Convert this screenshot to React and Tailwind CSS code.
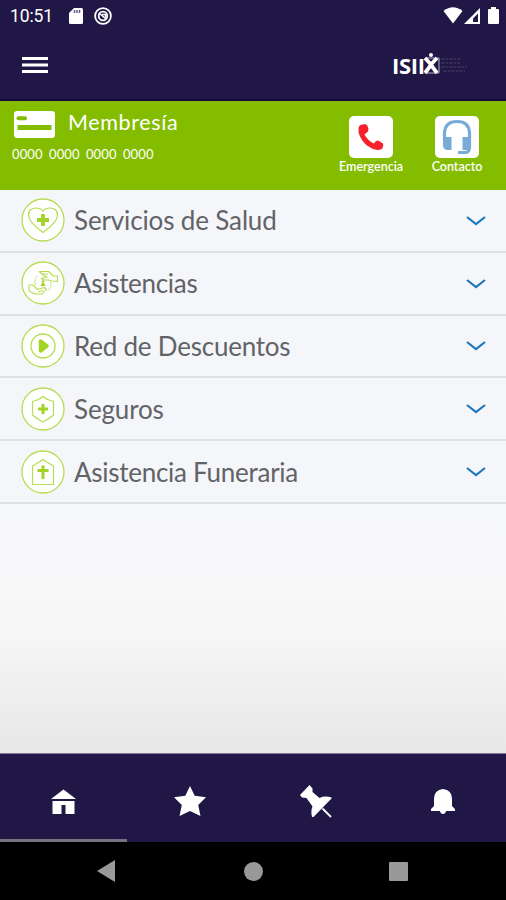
const services = [
   { label: "Servicios de Salud", icon: "heart", textClass: "tracking-[-0.14px]" },
   { label: "Asistencias", icon: "hands", textClass: "tracking-[-0.3px]" },
   { label: "Red de Descuentos", icon: "play", textClass: "tracking-[-0.22px]" },
   { label: "Seguros", icon: "shield", textClass: "tracking-[-0.15px]" },
   { label: "Asistencia Funeraria", icon: "chapel", textClass: "tracking-[-0.27px]" },
];

function StatusBar() {
   return (
      <div className="flex h-[31px] items-center justify-between pl-[10px] pr-[7px]">
         <div className="flex items-center">
            <span className="w-[43px] whitespace-nowrap font-['Roboto',sans-serif] text-[17.5px] leading-8 tracking-[-0.1px]">
               10:51
            </span>
            <svg className="ml-4 h-4 w-[14px]" viewBox="0 0 14 16">
               <path d="M5 0h7.500Q14 0 14 1.500V14.500Q14 16 12.500 16h-11Q0 16 0 14.500V5Z" fill="#fff" />
               <path d="M5.500 2v3M8 2v3M10.500 2v3" stroke="#635b80" strokeWidth="1.500" />
            </svg>
            <svg className="ml-[11px] h-[18px] w-[18px]" viewBox="0 0 18 18" fill="none" stroke="#fff">
               <circle cx="9" cy="9" r="7.900" strokeWidth="1.800" />
               <circle cx="9" cy="9" r="4.300" strokeWidth="1.800" />
               <path d="M5 6l7 6M8 7.500h3.500v3" strokeWidth="1.500" />
            </svg>
         </div>
         <div className="flex items-center">
            <svg className="h-[17px] w-[20px]" viewBox="0 0 20 17">
               <path d="M0.500 4Q10-3.500 19.500 4L10 16.500Z" fill="#fff" />
            </svg>
            <svg className="ml-px h-4 w-4" viewBox="0 0 16 16">
               <path d="M16 0v16H0Z" fill="#fff" />
               <path d="M14 5.500v8.500H9V10.500Z" fill="#211746" />
            </svg>
            <svg className="ml-2 h-[17px] w-[11px]" viewBox="0 0 11 17">
               <path d="M3 0h5v2h2q1 0 1 1v13q0 1-1 1H1q-1 0-1-1V3q0-1 1-1h2Z" fill="#fff" />
            </svg>
         </div>
      </div>
   );
}

function Logo() {
   return (
      <div className="flex items-center">
         <span className="w-[31px] whitespace-nowrap font-['Open_Sans',sans-serif] text-[22px] font-bold leading-6 tracking-[-0.3px]">
            ISII
         </span>
         <svg className="-mt-0.5 h-[21px] w-[17px]" viewBox="0 0 17 21">
            <path d="M2 5H16V20H2" fill="none" stroke="#b8b4cb" />
            <circle cx="8" cy="2" r="2" fill="#fff" />
            <path d="M2 5L8 11.500L14 5M2 20L8 12L14 20" fill="none" stroke="#fff" strokeWidth="3.800" />
         </svg>
         <svg className="h-4 w-7" viewBox="0 0 28 16" stroke="#463e69" strokeDasharray="4 1 2 1">
            <path d="M1 2h21M1 6h19M1 10h26M3 14h22" />
         </svg>
      </div>
   );
}

function ServiceIcon({ name }) {
   return (
      <svg className="h-11 w-11 shrink-0" viewBox="0 0 44 44" fill="none" stroke="#b7dc50">
         <circle cx="22" cy="22" r="21" fill="#fff" strokeWidth="1.300" />
         {name === "heart" && (
            <>
               <path d="M22 34.500C19 32 8 25 7.500 17.500C7 12 11 10 15 10C18 10 20.500 11 22 13C23.500 11 26 10 29 10C33 10 37 12 36.500 17.500C36 25 25 32 22 34.500Z" strokeWidth="1.200" />
               <path d="M22 16v12M16 22h12" stroke="#a3d326" strokeWidth="3.800" />
            </>
         )}
         {name === "hands" && (
            <>
               <path d="M17 14.500Q12.500 18 14.500 24M26.500 30Q31.500 26 29.500 21" strokeWidth="0.700" />
               <path
                  d="M18 10.500H27.500L32.500 15H36.500V20.500L31 20L27.500 19H23L20.500 17.500L26 16L22 14L18 10.500M20.500 13H27M8 24H12L16.500 28.500L23 26.500L25.500 28L21 33H14L8 30V24M17 31L22 29.500"
                  strokeWidth="1.100"
                  strokeLinejoin="round"
               />
               <circle cx="22" cy="20.500" r="1.300" fill="#a3d326" stroke="none" />
               <path d="M19.500 25L21 22H23L24.500 25Z" fill="#a3d326" stroke="none" />
            </>
         )}
         {name === "play" && (
            <>
               <circle cx="22" cy="22" r="12" strokeWidth="1.300" />
               <path d="M19.500 17L26 22L19.500 27Z" fill="#a3d326" stroke="#a3d326" strokeWidth="3.500" strokeLinejoin="round" />
            </>
         )}
         {name === "shield" && (
            <>
               <path d="M22 9.500Q26 13 32.500 14.500V28Q28 32 22 35Q16 32 11.500 28V14.500Q18 13 22 9.500Z" strokeWidth="1.200" />
               <path d="M22 17v10M17 22h10" stroke="#a3d326" strokeWidth="3" />
            </>
         )}
         {name === "chapel" && (
            <>
               <path d="M11.500 34.500V16Q17 13 22 9.500Q27 13 32.500 16V34.500Z" strokeWidth="1.200" />
               <path d="M22 15.500V29M16.500 20.500h11" stroke="#a3d326" strokeWidth="3" />
            </>
         )}
      </svg>
   );
}

function ServiceRow({ label, icon, textClass }) {
   return (
      <button className="flex h-[62.8px] w-full items-center border-b-2 border-[#e0e1e3] pl-[21px] pr-5 text-left">
         <ServiceIcon name={icon} />
         <span className={`ml-[9px] grow whitespace-nowrap font-['Lato',sans-serif] text-[26px] leading-8 text-[#626367] ${textClass}`}>
            {label}
         </span>
         <svg className="h-[11px] w-5" viewBox="0 0 20 11" fill="none" stroke="#1c78bd" strokeWidth="2.200">
            <path d="M1 2L10 9L19 2" />
         </svg>
      </button>
   );
}

function MembershipCard() {
   return (
      <section className="flex h-[89px] justify-between bg-[#84bd00] pl-3 pr-[23px]">
         <div className="pt-[9px]">
            <div className="flex h-7 items-center">
               <svg className="ml-[2px] h-[27px] w-[41px]" viewBox="0 0 41 27">
                  <rect width="41" height="27" rx="3" fill="#fff" />
                  <path d="M4.500 7.300h6.500" stroke="#84bd00" strokeWidth="4" strokeLinecap="round" />
                  <path d="M3.500 16.500h34" stroke="#84bd00" strokeWidth="5" />
               </svg>
               <span className="-mt-1 ml-[13px] whitespace-nowrap font-['Lato',sans-serif] text-[21.5px] leading-7 tracking-[0.65px]">
                  Membresía
               </span>
            </div>
            <div className="mt-[6px] whitespace-nowrap font-['Lato',sans-serif] text-[13px] leading-5 tracking-[0.1px] [word-spacing:3px]">
               0000 0000 0000 0000
            </div>
         </div>
         <div className="flex pt-[15px]">
            <button className="flex w-[68px] flex-col items-center">
               <svg className="h-[42px] w-11" viewBox="0 0 44 42">
                  <rect width="44" height="42" rx="5" fill="#fff" />
                  <path d="M9.500 13Q9.500 8.500 14 8.500Q16.500 7 18.500 10Q20 12.500 19 15.500L15.500 18.500Q18.500 24.500 25 27.500Q27 23.500 30 25L34 27.500Q35 30.500 33 33Q28 35 23 32.500Q15 29 11 20.500Q9 17 9.500 13Z" fill="#f5222d" />
               </svg>
               <span className="whitespace-nowrap font-['Lato',sans-serif] text-[12.5px] font-semibold leading-[17px]">Emergencia</span>
            </button>
            <button className="ml-[26px] flex w-[52px] flex-col items-center">
               <svg className="h-[42px] w-11" viewBox="0 0 44 42" fill="none" stroke="#78abd6">
                  <rect width="44" height="42" rx="5" fill="#fff" stroke="none" />
                  <path d="M9.500 24V17Q10 5.500 22 5.500T34.500 17V31Q34.500 36.500 30 36.500H23" strokeWidth="3.200" />
                  <path d="M8 21h8.500v13H13Q8 34 8 29ZM27.500 21H36v10q0 3-4 3h-4.500Z" fill="#78abd6" stroke="none" />
               </svg>
               <span className="whitespace-nowrap font-['Lato',sans-serif] text-[12.5px] font-semibold leading-[17px]">Contacto</span>
            </button>
         </div>
      </section>
   );
}

function TabBar() {
   return (
      <nav className="grid h-[89px] grid-cols-4 border-t border-[#81799b] bg-[#211746]">
         <div className="flex items-center justify-center border-b-[3px] border-[#777180] pt-[9px]">
            <svg className="h-[25px] w-[25px]" viewBox="0 0 25 25" fill="#fff">
               <path d="M0 10L12.500 0.500L25 10Z" />
               <path d="M1.500 12H23.500V25H14.500V16H10.500V25H1.500Z" />
            </svg>
         </div>
         <div className="flex items-center justify-center pt-[6px]">
            <svg className="h-8 w-8" viewBox="0 0 32 32" fill="#fff">
               <path d="M16 1L20.700 10.800L32 12.300L24.200 20L26.500 31L16 26L5.500 31L7.800 20L0 12.300L11.300 10.800Z" />
            </svg>
         </div>
         <div className="flex items-center justify-center pt-[6px]">
            <svg className="h-[33px] w-8" viewBox="0 0 32 33" fill="#fff">
               <path d="M0 10L9.500 0L12.500 3.500V7L19.500 13Q25 10.500 31.500 12.500V13.500L13.500 32H12Q10.500 26 12.500 21.500L6.500 13L2 12.500Z" />
               <path d="M22.500 23.500L31 32" stroke="#fff" strokeWidth="1.800" />
            </svg>
         </div>
         <div className="flex items-center justify-center pt-[6px]">
            <svg className="h-[25px] w-6" viewBox="0 0 24 25" fill="#fff">
               <path d="M12 0Q21 1 21 10V17L24 20V22H0V20L3 17V10Q3 1 12 0Z" />
               <path d="M8.500 21h7q-1 4-3.500 4t-3.500-4Z" />
            </svg>
         </div>
      </nav>
   );
}

function App() {
   return (
      <div className="flex h-[900px] w-[506px] flex-col overflow-hidden bg-[#f5f6fa] text-white">
         <header className="h-[101px] border-b-2 border-[#160a3c] bg-[#211746]">
            <StatusBar />
            <div className="flex h-[67px] items-center justify-between pl-[22px] pr-[38px]">
               <svg className="h-4 w-[26px]" viewBox="0 0 26 16" stroke="#fff" strokeWidth="2.800">
                  <path d="M0 1.500h26M0 8h26M0 14.500h26" />
               </svg>
               <Logo />
            </div>
         </header>
         <MembershipCard />
         <main className="flex grow flex-col">
            {services.map((service) => (
               <ServiceRow key={service.label} {...service} />
            ))}
            <div className="grow bg-linear-to-b from-[#f8f9fb] via-[#f7f7f8] to-[#e7e7e8]" />
         </main>
         <TabBar />
         {/* Android navigation */}
         <div className="flex h-[58px] items-center bg-black">
            <svg className="ml-[97px] h-[22px] w-[18px]" viewBox="0 0 18 22">
               <path d="M18 0v22L0 11Z" fill="#999" />
            </svg>
            <div className="ml-[129px] h-[19px] w-[19px] rounded-full bg-[#999]" />
            <div className="ml-[126px] h-[19px] w-[19px] rounded-[1px] bg-[#999]" />
         </div>
      </div>
   );
}

export default App;
